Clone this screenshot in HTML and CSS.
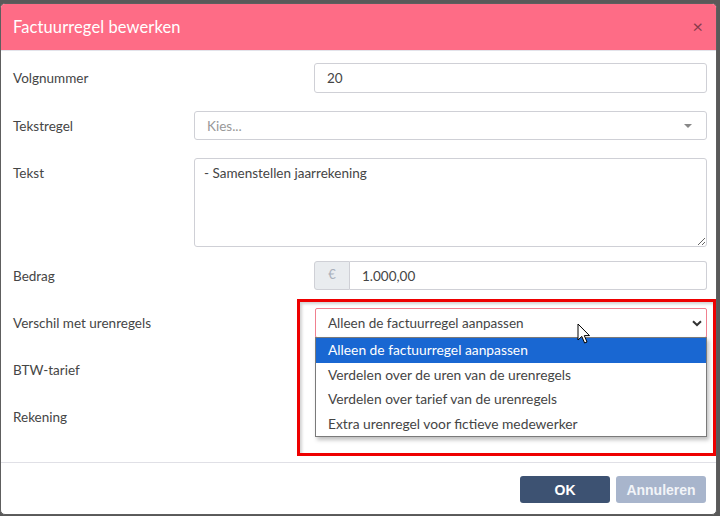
FILE: index.html
```html
<!DOCTYPE html>
<html lang="nl">
<head>
<meta charset="utf-8">
<title>Factuurregel bewerken</title>
<link rel="stylesheet" href="styles.css">
</head>
<body>
<div class="modal">
  <div class="modal-header">
    <h1 class="modal-title">Factuurregel bewerken</h1>
    <span class="close">&times;</span>
  </div>
  <div class="modal-body">
    <div class="row row-first">
      <label class="lbl">Volgnummer</label>
      <div class="field narrow"><div class="input">20</div></div>
    </div>
    <div class="row">
      <label class="lbl">Tekstregel</label>
      <div class="field">
        <div class="input select2"><span class="placeholder">Kies...</span><span class="caret"></span></div>
      </div>
    </div>
    <div class="row row-text">
      <label class="lbl">Tekst</label>
      <div class="field"><textarea class="textarea">- Samenstellen jaarrekening</textarea></div>
    </div>
    <div class="row">
      <label class="lbl">Bedrag</label>
      <div class="field narrow">
        <div class="group"><span class="addon">&euro;</span><span class="input group-input">1.000,00</span></div>
      </div>
    </div>
    <div class="row">
      <label class="lbl">Verschil met urenregels</label>
      <div class="field narrow">
        <div class="input select-open">Alleen de factuurregel aanpassen
          <svg class="chev" width="10" height="7" viewBox="0 0 10 7"><path d="M1 1.2 L5 5 L9 1.2" fill="none" stroke="#333" stroke-width="2"/></svg>
        </div>
        <ul class="options">
          <li class="opt active">Alleen de factuurregel aanpassen</li>
          <li class="opt">Verdelen over de uren van de urenregels</li>
          <li class="opt">Verdelen over tarief van de urenregels</li>
          <li class="opt">Extra urenregel voor fictieve medewerker</li>
        </ul>
      </div>
    </div>
    <div class="row">
      <label class="lbl">BTW-tarief</label>
    </div>
    <div class="row">
      <label class="lbl">Rekening</label>
    </div>
  </div>
  <div class="modal-footer">
    <button class="btn btn-ok">OK</button>
    <button class="btn btn-cancel">Annuleren</button>
  </div>
  <div class="highlight"></div>
  <svg class="pointer" width="14" height="22" viewBox="0 0 14 22">
    <path d="M1 1 L1 17 L4.8 13.4 L7.6 20 L10 19 L7.3 12.6 L12.5 12.6 Z" fill="#fff" stroke="#000" stroke-width="1" stroke-linejoin="round"/>
  </svg>
</div>
</body>
</html>
```
FILE: styles.css
```css
html, body {
  margin: 0;
  padding: 0;
}
body {
  background: #595959;
  width: 720px;
  height: 516px;
  overflow: hidden;
  font-family: "Lato", "Noto Sans", sans-serif;
  color: #444;
}
.modal {
  position: relative;
  margin-top: 3px;
  width: 715px;
  height: 510px;
  background: #fff;
  border: 1px solid #5e5e5e;
  border-radius: 5px;
  overflow: hidden;
  display: flex;
  flex-direction: column;
}
.modal-header {
  height: 46px;
  flex: none;
  background: #fe6c86;
  border-bottom: 1px solid #e3e3ea;
  display: flex;
  align-items: center;
  justify-content: space-between;
  padding: 0 13px 0 12px;
}
.modal-title {
  margin: 0;
  font-size: 16.5px;
  font-weight: 400;
  color: #fff;
  letter-spacing: 0.1px;
}
.close {
  color: #8a3a4c;
  font-size: 18px;
  line-height: 1;
  margin-top: -2px;
}
.modal-body {
  flex: 1;
  padding: 12px 9px 0 12px;
}
.row {
  display: grid;
  grid-template-columns: 181px 1fr;
  align-items: start;
  margin-bottom: 17px;
  min-height: 30px;
}
.row-first {
  margin-bottom: 18px;
}
.row-text {
  margin-bottom: 14px;
}
.lbl {
  font-size: 13.5px;
  color: #454545;
  line-height: 18px;
  padding-top: 6px;
}
.field {
  position: relative;
}
.narrow {
  margin-left: 120px;
}
.input {
  box-sizing: border-box;
  height: 30px;
  border: 1px solid #cfd0d6;
  border-radius: 3px;
  padding: 0 12px;
  font-size: 13.5px;
  line-height: 28px;
  color: #454545;
  background: #fff;
}
.select2 {
  height: 29px;
  display: flex;
  justify-content: space-between;
  align-items: center;
  padding-right: 14px;
}
.placeholder {
  color: #999;
}
.caret {
  width: 0;
  height: 0;
  border-left: 4px solid transparent;
  border-right: 4px solid transparent;
  border-top: 4px solid #888;
}
.textarea {
  display: block;
  box-sizing: border-box;
  width: 100%;
  height: 89px;
  border: 1px solid #cfd0d6;
  border-radius: 3px;
  padding: 6px 9px;
  font-family: inherit;
  font-size: 13.5px;
  color: #454545;
  resize: vertical;
  margin: 0;
}
.group {
  display: flex;
  height: 29px;
}
.addon {
  box-sizing: border-box;
  width: 36px;
  background: #e9ecef;
  border: 1px solid #cfd0d6;
  border-radius: 3px 0 0 3px;
  color: #a9b0bb;
  font-size: 13px;
  text-align: center;
  line-height: 25px;
}
.group-input {
  flex: 1;
  height: 29px;
  border-left: 0;
  border-radius: 0 3px 3px 0;
}
.select-open {
  height: 30px;
  margin-left: 1px;
  border-color: #f0808f;
  border-radius: 2px;
  display: flex;
  justify-content: space-between;
  align-items: center;
  padding-right: 4px;
}
.chev {
  display: block;
}
.options {
  position: absolute;
  left: 1px;
  right: 0;
  top: 29px;
  margin: 0;
  padding: 0;
  list-style: none;
  background: #fff;
  border: 1px solid #7a7a7a;
  box-shadow: 2px 3px 4px rgba(0, 0, 0, 0.25);
  z-index: 2;
}
.opt {
  height: 24.5px;
  line-height: 24px;
  padding-left: 12px;
  font-size: 13.8px;
  color: #454545;
}
.opt.active {
  background: #1967d2;
  color: #fff;
}
.modal-footer {
  box-sizing: border-box;
  flex: none;
  height: 52px;
  border-top: 1px solid #e0e0e6;
  display: flex;
  justify-content: flex-end;
  align-items: flex-start;
  gap: 6px;
  padding: 13px 10px 0 0;
}
.btn {
  width: 90px;
  height: 27px;
  border: 0;
  border-radius: 3px;
  font-family: "Liberation Sans", Arial, sans-serif;
  font-weight: 700;
  font-size: 14px;
  color: #fff;
  padding: 0;
}
.btn-ok {
  background: #3d5272;
}
.btn-cancel {
  background: #a8b5cc;
  color: #f2f4f8;
}
.highlight {
  position: absolute;
  left: 296px;
  top: 295px;
  width: 413px;
  height: 151px;
  border: 3px solid #ee0000;
  box-shadow: inset 2px 2px 3px rgba(0, 0, 0, 0.18);
  pointer-events: none;
  z-index: 3;
}
.pointer {
  position: absolute;
  left: 576px;
  top: 319px;
  z-index: 4;
}
```
